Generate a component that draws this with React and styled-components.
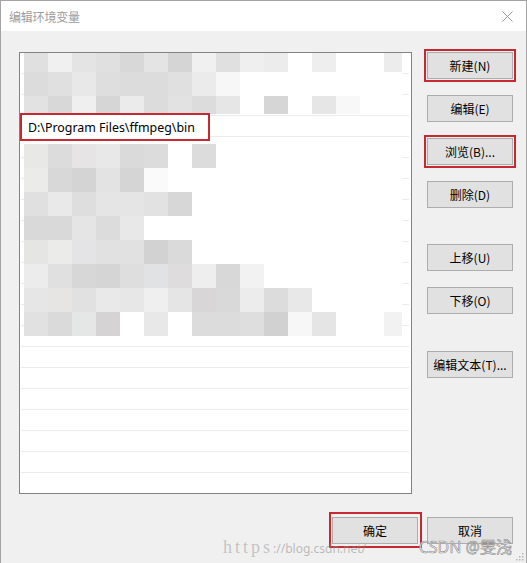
import styled, { createGlobalStyle } from 'styled-components';

const GlobalStyle = createGlobalStyle`
  html, body {
    margin: 0;
    padding: 0;
    background: #f0f0f0;
  }
  * {
    box-sizing: border-box;
  }
`;

const UI_FONT = `"Noto Sans", "Noto Sans CJK SC", sans-serif`;

// mosaic covering the redacted entries, '' = white cell
const MOSAIC_TOP = [
  ['#e0e0e0', '#f0f0f0', '#e4e4e4', '#e0e0e0', '#d8d8d8', '#e4e4e4', '#d5d5d5', '#f0f0f0', '#e0e0e0', '#efefef', '#ececec', '', '#eeeeee', '', '', '#ececec'],
  ['#dcdcdc', '#e0e0e0', '#e8e8e8', '#dedede', '#dcdcdc', '#dcdcdc', '#e0e0e0', '#ebebeb', '#f7f7f7', '', '', '', '', '', '', ''],
  ['#e2e2e2', '#d8d8d8', '#efefef', '#d6d6d6', '#ebebeb', '#dcdcdc', '#e2e2e2', '#dcdcdc', '#e6e6e6', '', '#d6d6d6', '', '#e6e6e6', '#f8f8f8', '', ''],
];

const MOSAIC_BOTTOM = [
  ['#e8e8e6', '#dcdcdc', '#e6e4e4', '#e8e8e8', '#dadada', '#dcdcdc', '', '#dcdcdc', '', '', '', '', '', '', '', ''],
  ['#ebebea', '#d8d8d8', '#d4d4d4', '#e3e3e3', '#d5d5d5', '#fafafa', '', '', '', '', '', '', '', '', '', ''],
  ['#e0e0e0', '#e9e9e9', '#dedede', '#e5e5e5', '#e5e5e5', '#e2e2e2', '#d7d7d7', '', '', '', '', '', '', '', '', ''],
  ['#d9d9d9', '#d9d9d9', '#e5e5e5', '#dcdcdc', '#e8e8e8', '', '', '', '', '', '', '', '', '', '', ''],
  ['#e5e5e4', '#ebebea', '#e4e4e6', '#e1e1e1', '#e1e1e1', '#d2d2d2', '#dadada', '', '', '', '', '', '', '', '', ''],
  ['#ececec', '#e0e0e0', '#d7d7d7', '#d6d5d6', '#dedede', '#e0e2e3', '#dedcdd', '#eeeeee', '#d8d8d8', '#f2f2f2', '', '', '', '', '', ''],
  ['#e6e6e6', '#e6e5e4', '#e1e1e1', '#e9e9e9', '#e7e7e7', '#efefef', '#e5e5e5', '#d8d6d7', '#d9d9d9', '#ececec', '#dcdcdc', '#e8e8e8', '', '', '', ''],
  ['#e1e1e1', '#dadada', '#e5e7e6', '#d5d3d4', '', '#e8e8e8', '', '#dcdcdc', '#dcdcdc', '#dedede', '#d1d1d1', '#f7f7f7', '#e5e5e5', '', '', '#f2f2f2'],
];

const Window = styled.div`
  position: relative;
  width: 527px;
  height: 563px;
  background: #f0f0f0;
  border: 1px solid #a3a3a3;
  border-bottom: none;
  overflow: hidden;
  font-family: ${UI_FONT};
`;

const TitleBar = styled.div`
  height: 30px;
  background: #ffffff;
  display: flex;
  align-items: center;
  justify-content: space-between;
  padding: 0 13px 0 8px;
`;

const Title = styled.span`
  font-family: "Noto Sans CJK SC", sans-serif;
  font-size: 12px;
  color: #9c9c9c;
  letter-spacing: -0.2px;
`;

const Body = styled.div`
  padding: 21px 13px 0 18px;
`;

const Main = styled.div`
  display: flex;
  gap: 15px;
  align-items: flex-start;
`;

const ListBox = styled.div`
  position: relative;
  width: 393px;
  height: 442px;
  background: #ffffff;
  border: 1px solid #828282;
  overflow: hidden;
`;

const Row = styled.div`
  position: relative;
  height: 21px;
  margin: 0 2px 0 1px;
  border-bottom: 1px solid #ececec;
`;

const Editor = styled.div`
  position: absolute;
  top: -3px;
  left: -1px;
  width: 190px;
  height: 28px;
  display: flex;
  align-items: center;
  padding-left: 6px;
  background: #ffffff;
  border: 2px solid #c62930;
  font-family: "Noto Sans", sans-serif;
  font-size: 12.4px;
  color: #000;
  z-index: 2;
`;

const Mosaic = styled.svg`
  position: absolute;
  left: 0;
  top: 0;
  z-index: 1;
`;

const ButtonColumn = styled.div`
  display: flex;
  flex-direction: column;
  gap: 16px;
`;

const Button = styled.button`
  position: relative;
  width: 86px;
  height: 27px;
  margin-top: ${(p) => p.$extra || 0}px;
  padding: 0;
  background: #e1e1e1;
  border: 1px solid #adadad;
  font-family: "Noto Sans CJK SC", sans-serif;
  font-size: 12px;
  line-height: 14px;
  color: #000;
  display: flex;
  align-items: center;
  justify-content: center;

  &::after {
    content: '';
    display: ${(p) => (p.$mark ? 'block' : 'none')};
    position: absolute;
    inset: ${(p) => p.$mark || '0'};
    border: 2px solid #c62930;
  }
`;

const Footer = styled.div`
  display: flex;
  justify-content: flex-end;
  gap: 9px;
  margin-top: 23px;
`;

const Watermark = styled.div`
  position: absolute;
  left: 222px;
  right: 14px;
  top: 538px;
  display: flex;
  align-items: baseline;
  pointer-events: none;
  z-index: 5;
`;

const WaterScheme = styled.span`
  font-family: "Liberation Serif", serif;
  font-size: 18px;
  line-height: 16px;
  letter-spacing: 3px;
  color: rgba(150, 150, 150, 0.5);
`;

const WaterUrl = styled.span`
  font-family: "Noto Sans", sans-serif;
  font-size: 12px;
  line-height: 14px;
  color: rgba(140, 140, 140, 0.55);
`;

const WaterName = styled.span`
  margin-left: auto;
  font-family: "Noto Sans", "Noto Sans CJK SC", sans-serif;
  font-size: 16px;
  line-height: 16px;
  color: rgba(238, 238, 238, 0.9);
  -webkit-text-stroke: 0.6px rgba(120, 120, 120, 0.85);
`;

const Grip = styled.svg`
  position: absolute;
  right: 2px;
  bottom: 2px;
`;

function MosaicLayer() {
  const cell = 24;
  const x0 = 4;
  const maxX = 382;
  const rects = [];
  const draw = (rows, y0, clipTop, clipBottom) => {
    rows.forEach((row, j) => {
      const top = Math.max(y0 + j * cell, clipTop);
      const bottom = Math.min(y0 + (j + 1) * cell, clipBottom);
      row.forEach((shade, i) => {
        const left = x0 + i * cell;
        const w = Math.min(cell, maxX - left);
        rects.push(
          <rect key={`${y0}-${j}-${i}`} x={left} y={top} width={w} height={bottom - top} fill={shade || '#ffffff'} />
        );
      });
    });
  };
  draw(MOSAIC_TOP, -5, 0, 61);
  draw(MOSAIC_BOTTOM, 91, 91, 283);
  return (
    <Mosaic width="391" height="440" viewBox="0 0 391 440">
      {rects}
    </Mosaic>
  );
}

export default function App() {
  const rows = Array.from({ length: 21 }, (_, i) => i);
  return (
    <>
      <GlobalStyle />
      <Window>
        <TitleBar>
          <Title>编辑环境变量</Title>
          <svg width="11" height="11" viewBox="0 0 11 11">
            <path d="M0.5 0.5 L10.5 10.5 M10.5 0.5 L0.5 10.5" stroke="#9a9a9a" strokeWidth="1" fill="none" />
          </svg>
        </TitleBar>
        <Body>
          <Main>
            <ListBox>
              <MosaicLayer />
              {rows.map((i) => (
                <Row key={i}>
                  {i === 3 && <Editor>D:\Program Files\ffmpeg\bin</Editor>}
                </Row>
              ))}
            </ListBox>
            <ButtonColumn>
              <Button $mark="-4px">新建(N)</Button>
              <Button>编辑(E)</Button>
              <Button $mark="-4px">浏览(B)...</Button>
              <Button>删除(D)</Button>
              <Button $extra={20}>上移(U)</Button>
              <Button>下移(O)</Button>
              <Button $extra={21}>编辑文本(T)...</Button>
            </ButtonColumn>
          </Main>
          <Footer>
            <Button $mark="-6px -5px -5px -4px">确定</Button>
            <Button>取消</Button>
          </Footer>
        </Body>
        <Watermark>
          <WaterScheme>https</WaterScheme>
          <WaterUrl>://blog.csdn.net/</WaterUrl>
          <WaterName>CSDN @雯浅</WaterName>
        </Watermark>
        <Grip width="10" height="10" viewBox="0 0 10 10">
          {[[8, 2], [8, 5], [5, 5], [8, 8], [5, 8], [2, 8]].map(([x, y]) => (
            <rect key={`${x}-${y}`} x={x} y={y} width="1.5" height="1.5" fill="#b5b5b5" />
          ))}
        </Grip>
      </Window>
    </>
  );
}
